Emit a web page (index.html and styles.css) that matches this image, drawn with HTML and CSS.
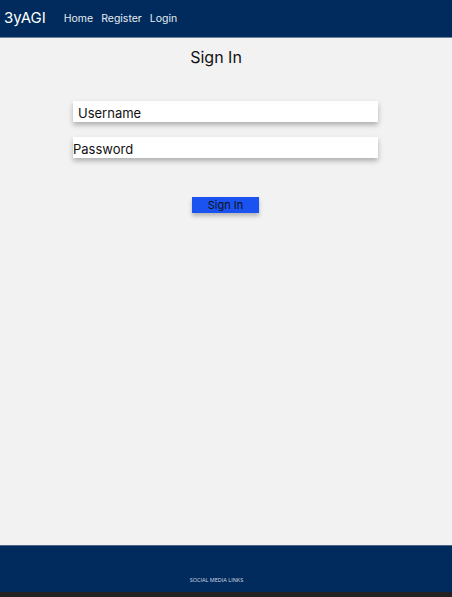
FILE: index.html
```html
<!DOCTYPE html>
<html>
<head>
<meta charset="utf-8">
<link rel="stylesheet" href="styles.css">
</head>
<body>
<header class="topbar">
  <span class="logo">3yAGI</span>
  <nav class="nav">
    <a href="#">Home</a>
    <a href="#">Register</a>
    <a href="#">Login</a>
  </nav>
</header>
<main class="main">
  <h1 class="title">Sign In</h1>
  <form class="form">
    <div class="field field-user">Username</div>
    <div class="field field-pass">Password</div>
    <button type="button" class="btn">Sign In</button>
  </form>
</main>
<footer class="footer">
  <p class="social">SOCIAL MEDIA LINKS</p>
</footer>
<div class="bottom-strip"></div>
</body>
</html>
```
FILE: styles.css
```css
* { box-sizing: border-box; }
html, body { margin: 0; padding: 0; }
body {
  font-family: Inter, "Noto Sans", sans-serif;
  background: #f2f2f2;
  min-height: 597px;
  display: flex;
  flex-direction: column;
}
.topbar {
  height: 38px;
  background: #002b5c;
  border-bottom: 1px solid #6f819a;
  display: flex;
  align-items: center;
  padding-left: 4px;
  padding-bottom: 2px;
}
.logo {
  color: #fff;
  font-size: 15px;
  margin-right: 18px;
}
.nav {
  display: flex;
  gap: 8px;
  padding-top: 2px;
}
.nav a {
  color: #e6ebf2;
  text-decoration: none;
  font-size: 10.5px;
}
.main {
  flex: 1;
  display: flex;
  flex-direction: column;
  align-items: center;
}
.title {
  font-size: 16px;
  font-weight: 400;
  color: #111;
  margin: 9px 20px 0 0;
  line-height: 20px;
}
.form {
  margin-top: 34px;
  margin-right: 1px;
  display: flex;
  flex-direction: column;
  align-items: center;
}
.field {
  width: 305px;
  height: 21px;
  background: #fff;
  font-size: 13px;
  line-height: 21px;
  padding-top: 2px;
  color: #111;
  box-shadow: 0 3px 5px rgba(0,0,0,0.28);
}
.field-user { padding-left: 5px; }
.field-pass { margin-top: 15px; padding-left: 0; padding-top: 2px; }
.btn {
  margin-top: 39px;
  width: 67px;
  height: 16px;
  padding: 0;
  border: none;
  background: #1a53f0;
  color: #111;
  font-family: Inter, "Noto Sans", sans-serif;
  font-size: 11px;
  line-height: 16px;
  box-shadow: 0 3px 4px rgba(0,0,0,0.25);
}
.footer {
  height: 47px;
  background: #002b5c;
  border-top: 1px solid #4f6585;
  display: flex;
  justify-content: center;
  align-items: flex-end;
}
.social {
  margin: 0 19px 8px 0;
  font-family: "Open Sans", "Noto Sans", sans-serif;
  font-size: 5.5px;
  color: #d5dbe4;
  letter-spacing: 0;
}
.bottom-strip {
  height: 5px;
  background: #222;
}
```
